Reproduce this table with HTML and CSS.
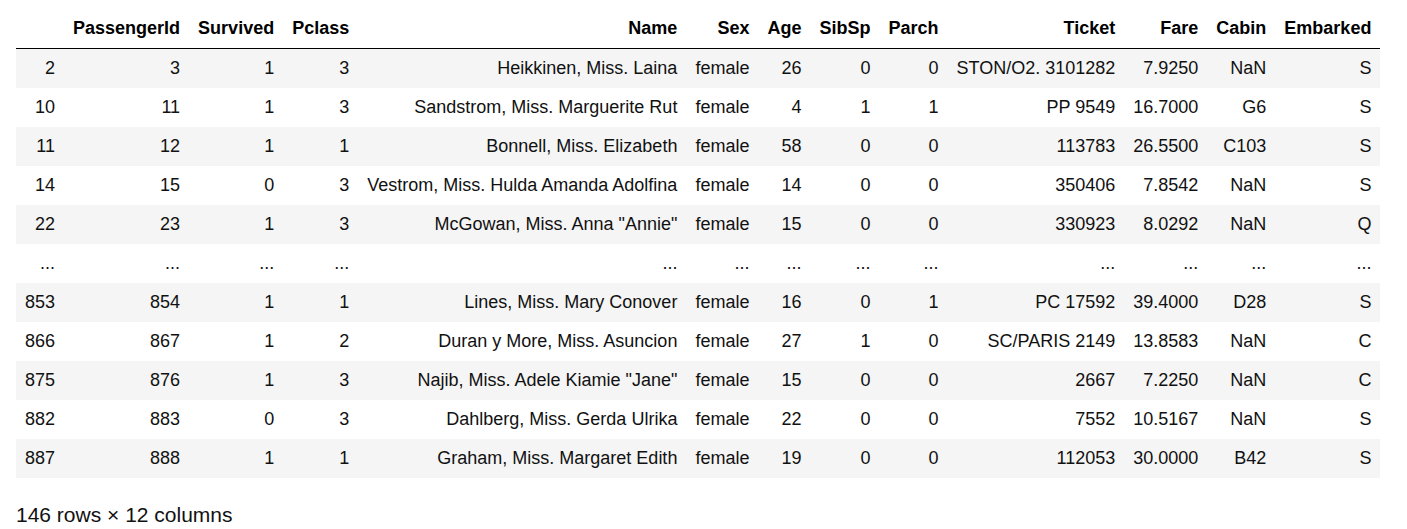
FILE: index.html
```html
<!DOCTYPE html>
<html>
<head>
<meta charset="utf-8">
<link rel="stylesheet" href="styles.css">
</head>
<body>
<div class="output">
<table class="dataframe">
<thead>
<tr><th></th><th>PassengerId</th><th>Survived</th><th>Pclass</th><th>Name</th><th>Sex</th><th>Age</th><th>SibSp</th><th>Parch</th><th>Ticket</th><th>Fare</th><th>Cabin</th><th>Embarked</th></tr>
</thead>
<tbody>
<tr><th>2</th><td>3</td><td>1</td><td>3</td><td>Heikkinen, Miss. Laina</td><td>female</td><td>26</td><td>0</td><td>0</td><td>STON/O2. 3101282</td><td>7.9250</td><td>NaN</td><td>S</td></tr>
<tr><th>10</th><td>11</td><td>1</td><td>3</td><td>Sandstrom, Miss. Marguerite Rut</td><td>female</td><td>4</td><td>1</td><td>1</td><td>PP 9549</td><td>16.7000</td><td>G6</td><td>S</td></tr>
<tr><th>11</th><td>12</td><td>1</td><td>1</td><td>Bonnell, Miss. Elizabeth</td><td>female</td><td>58</td><td>0</td><td>0</td><td>113783</td><td>26.5500</td><td>C103</td><td>S</td></tr>
<tr><th>14</th><td>15</td><td>0</td><td>3</td><td>Vestrom, Miss. Hulda Amanda Adolfina</td><td>female</td><td>14</td><td>0</td><td>0</td><td>350406</td><td>7.8542</td><td>NaN</td><td>S</td></tr>
<tr><th>22</th><td>23</td><td>1</td><td>3</td><td>McGowan, Miss. Anna "Annie"</td><td>female</td><td>15</td><td>0</td><td>0</td><td>330923</td><td>8.0292</td><td>NaN</td><td>Q</td></tr>
<tr><th>...</th><td>...</td><td>...</td><td>...</td><td>...</td><td>...</td><td>...</td><td>...</td><td>...</td><td>...</td><td>...</td><td>...</td><td>...</td></tr>
<tr><th>853</th><td>854</td><td>1</td><td>1</td><td>Lines, Miss. Mary Conover</td><td>female</td><td>16</td><td>0</td><td>1</td><td>PC 17592</td><td>39.4000</td><td>D28</td><td>S</td></tr>
<tr><th>866</th><td>867</td><td>1</td><td>2</td><td>Duran y More, Miss. Asuncion</td><td>female</td><td>27</td><td>1</td><td>0</td><td>SC/PARIS 2149</td><td>13.8583</td><td>NaN</td><td>C</td></tr>
<tr><th>875</th><td>876</td><td>1</td><td>3</td><td>Najib, Miss. Adele Kiamie "Jane"</td><td>female</td><td>15</td><td>0</td><td>0</td><td>2667</td><td>7.2250</td><td>NaN</td><td>C</td></tr>
<tr><th>882</th><td>883</td><td>0</td><td>3</td><td>Dahlberg, Miss. Gerda Ulrika</td><td>female</td><td>22</td><td>0</td><td>0</td><td>7552</td><td>10.5167</td><td>NaN</td><td>S</td></tr>
<tr><th>887</th><td>888</td><td>1</td><td>1</td><td>Graham, Miss. Margaret Edith</td><td>female</td><td>19</td><td>0</td><td>0</td><td>112053</td><td>30.0000</td><td>B42</td><td>S</td></tr>
</tbody>
</table>
<p class="shape">146 rows × 12 columns</p>
</div>
</body>
</html>
```
FILE: styles.css
```css
html, body {
  margin: 0;
  padding: 0;
  background: #fff;
}
.output {
  padding: 9px 16px 0 16px;
  font-family: "Liberation Sans", Arial, sans-serif;
  color: #111;
}
.dataframe {
  border-collapse: collapse;
  border-spacing: 0;
  border: none;
  font-size: 18px;
  color: #111;
}
.dataframe th,
.dataframe td {
  text-align: right;
  vertical-align: middle;
  padding: 9px 9px;
  line-height: 21px;
  white-space: nowrap;
  border: none;
}
.dataframe thead th {
  font-weight: bold;
  color: #000;
}
.dataframe thead tr {
  border-bottom: 1px solid #000;
}
.dataframe tbody th {
  font-weight: normal;
}
.dataframe tbody tr:nth-child(odd) {
  background: #f5f5f5;
}
.shape {
  margin: 25px 0 0 0;
  font-size: 21px;
  line-height: 24px;
}
```
